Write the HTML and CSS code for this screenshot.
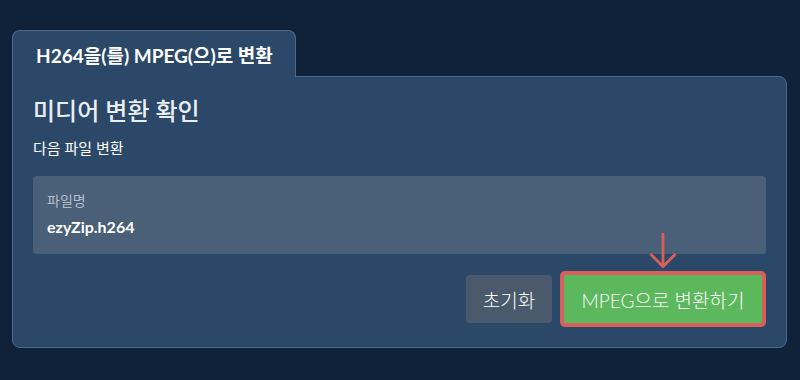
FILE: index.html
```html
<!DOCTYPE html>
<html lang="ko">
<head>
<meta charset="utf-8">
<link rel="stylesheet" href="styles.css">
</head>
<body>
<div class="wrap">
  <div class="tab">H264을(를) MPEG(으)로 변환</div>
  <div class="panel">
    <h1 class="title">미디어 변환 확인</h1>
    <p class="sub">다음 파일 변환</p>
    <div class="filebox">
      <div class="label">파일명</div>
      <div class="fname">ezyZip.h264</div>
    </div>
    <div class="actions">
      <button class="btn reset">초기화</button>
      <div class="convert-wrap">
        <svg class="arrow" width="28" height="36" viewBox="0 0 28 36">
          <path d="M14 0 V34 M1.5 21 L14 33.5 L26.5 21" fill="none" stroke="#d9605a" stroke-width="2.8"/>
        </svg>
        <button class="btn convert">MPEG으로 변환하기</button>
      </div>
    </div>
  </div>
</div>
</body>
</html>
```
FILE: styles.css
```css
html, body {
  margin: 0;
  padding: 0;
  background: #10223a;
  font-family: Lato, "Noto Sans CJK KR", sans-serif;
  color: #fff;
}
.wrap {
  padding: 30px 13px 0 12px;
}
.tab {
  position: relative;
  z-index: 1;
  box-sizing: border-box;
  width: 284px;
  height: 47px;
  margin-bottom: -1px;
  background: #2c4868;
  border: 1px solid #4e6888;
  border-bottom: none;
  border-radius: 8px 8px 0 0;
  font-weight: 700;
  font-size: 19px;
  line-height: 44px;
  padding-top: 3px;
  padding-left: 23px;
  color: #fff;
}
.panel {
  box-sizing: border-box;
  height: 272px;
  background: #2c4868;
  border: 1px solid #4e6888;
  border-radius: 0 8px 8px 8px;
  padding: 17px 20px 0 20px;
}
.title {
  margin: 0;
  font-size: 24px;
  font-weight: 500;
  line-height: 34px;
  color: #eaeef2;
}
.sub {
  margin: 9px 0 0 0;
  font-size: 15px;
  line-height: 22px;
  color: #fff;
}
.filebox {
  margin-top: 17px;
  background: #4a5f78;
  border-radius: 4px;
  height: 78px;
  box-sizing: border-box;
  padding: 16px 14px 0 14px;
}
.label {
  font-size: 14px;
  line-height: 18px;
  color: #b3bdc9;
}
.fname {
  margin-top: 7px;
  font-size: 16px;
  font-weight: 700;
  line-height: 20px;
  color: #fff;
}
.actions {
  display: flex;
  justify-content: flex-end;
  align-items: flex-end;
  gap: 8px;
  margin-top: -21px;
}
.btn {
  font-family: Lato, "Noto Sans CJK KR", sans-serif;
  font-weight: 300;
  color: #fff;
  border: none;
  border-radius: 4px;
  cursor: pointer;
  padding: 0;
}
.reset {
  width: 86px;
  height: 48px;
  background: #4a5a6c;
  font-size: 19px;
  margin-bottom: 4px;
}
.convert-wrap {
  display: flex;
  flex-direction: column;
  align-items: center;
}
.arrow {
  display: block;
  margin-bottom: 2px;
}
.convert {
  box-sizing: border-box;
  width: 206px;
  height: 56px;
  background: #5cb85c;
  border: 4px solid #d9605a;
  border-radius: 5px;
  font-size: 19px;
}
```
